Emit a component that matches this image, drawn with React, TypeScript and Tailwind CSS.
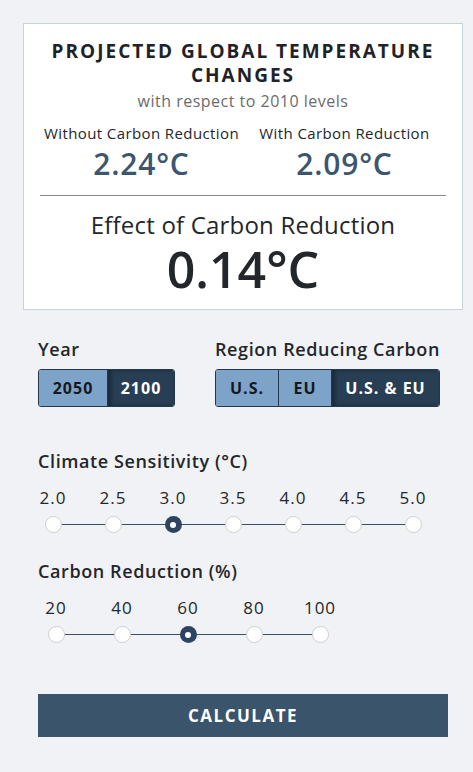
import React from "react";

const font = { fontFamily: '"Open Sans", "Liberation Sans", sans-serif' };

function SegGroup({ items, selected, widths }: { items: string[]; selected: number; widths: number[] }) {
  return (
    <div className="flex h-[38px] shrink-0 rounded-[3px] border border-[#24384b] overflow-hidden">
      {items.map((it, i) => (
        <div
          key={it}
          style={{ width: widths[i] }}
          className={
            "flex shrink-0 items-center justify-center text-[16px] font-bold tracking-[1px] " +
            (i > 0 ? "border-l border-[#24384b] " : "") +
            (i === selected
              ? "bg-[#283e54] text-white shadow-[inset_3px_0_4px_rgba(0,0,0,0.35)]"
              : "bg-[#7ea3c9] text-[#15191d]")
          }
        >
          {it}
        </div>
      ))}
    </div>
  );
}

function Slider({ labels, selected, step, lineEnd }: { labels: string[]; selected: number; step: number; lineEnd: number }) {
  return (
    <div className="relative flex">
      <div
        className="absolute top-[37px] h-px bg-[#3a5068]"
        style={{ left: step / 2, width: lineEnd }}
      />
      {labels.map((l, i) => (
        <div key={l} className="relative flex shrink-0 flex-col items-center" style={{ width: step }}>
          <div className="text-[17px] leading-[22px] tracking-[1px] text-[#23262b]">{l}</div>
          <div className="mt-[7px]">
            {i === selected ? (
              <div className="flex h-[17px] w-[17px] items-center justify-center rounded-full bg-[#2c4460]">
                <div className="h-[6px] w-[6px] rounded-full bg-white" />
              </div>
            ) : (
              <div className="h-[17px] w-[17px] rounded-full border border-[#cfcfcf] bg-white" />
            )}
          </div>
        </div>
      ))}
    </div>
  );
}

export default function App() {
  return (
    <div className="min-h-[772px] w-[473px] bg-[#f1f2f6] pt-[23px]" style={font}>
      <div className="ml-[23px] w-[440px] h-[287px] border border-[#c9d1d9] bg-white px-[16px] pt-[15px] text-center">
        <div className="text-[19px] leading-[24px] font-bold tracking-[2px] text-[#1f2328]">
          PROJECTED GLOBAL TEMPERATURE
          <br />
          CHANGES
        </div>
        <div className="mt-[3px] text-[16px] leading-[22px] tracking-[0.5px] text-[#6b6b6b]">with respect to 2010 levels</div>
        <div className="mt-[11px] grid grid-cols-2">
          <div>
            <div className="text-[15px] leading-[20px] tracking-[0.4px] text-[#23262b]">Without Carbon Reduction</div>
            <div className="mt-[4px] text-[30px] leading-[34px] font-semibold tracking-[0.8px] text-[#3d5670]">2.24°C</div>
          </div>
          <div>
            <div className="text-[15px] leading-[20px] tracking-[0.4px] text-[#23262b]">With Carbon Reduction</div>
            <div className="mt-[4px] text-[30px] leading-[34px] font-semibold tracking-[0.8px] text-[#3d5670]">2.09°C</div>
          </div>
        </div>
        <div className="mt-[14px] h-px bg-[#8a8a8a]" />
        <div className="mt-[15px] text-[24px] leading-[28px] tracking-[0.2px] text-[#23262b]">Effect of Carbon Reduction</div>
        <div className="mt-[4px] text-[50px] leading-[52px] font-semibold text-[#23262b]">0.14°C</div>
      </div>

      <div className="px-[38px] pt-[28px]">
        <div className="flex">
          <div className="w-[177px] shrink-0">
            <div className="text-[18px] leading-[22px] font-semibold tracking-[0.6px] text-[#23262b]">Year</div>
            <div className="mt-[9px] flex">
              <SegGroup items={["2050", "2100"]} selected={1} widths={[68, 67]} />
            </div>
          </div>
          <div className="shrink-0">
            <div className="text-[18px] leading-[22px] font-semibold tracking-[0.6px] text-[#23262b]">Region Reducing Carbon</div>
            <div className="mt-[9px] flex">
              <SegGroup items={["U.S.", "EU", "U.S. & EU"]} selected={2} widths={[62, 53, 108]} />
            </div>
          </div>
        </div>

        <div className="mt-[43px] text-[18px] leading-[22px] font-semibold tracking-[0.6px] text-[#23262b]">Climate Sensitivity (°C)</div>
        <div className="-ml-[15px] mt-[15px]">
          <Slider labels={["2.0", "2.5", "3.0", "3.5", "4.0", "4.5", "5.0"]} selected={2} step={60} lineEnd={368} />
        </div>

        <div className="mt-[27px] text-[18px] leading-[22px] font-semibold tracking-[0.6px] text-[#23262b]">Carbon Reduction (%)</div>
        <div className="-ml-[15px] mt-[15px]">
          <Slider labels={["20", "40", "60", "80", "100"]} selected={2} step={66} lineEnd={264} />
        </div>

        <button className="mt-[51px] flex h-[43px] w-[410px] items-center justify-center bg-[#3a546b] text-[17px] font-bold tracking-[1.5px] text-white">
          CALCULATE
        </button>
      </div>
    </div>
  );
}
